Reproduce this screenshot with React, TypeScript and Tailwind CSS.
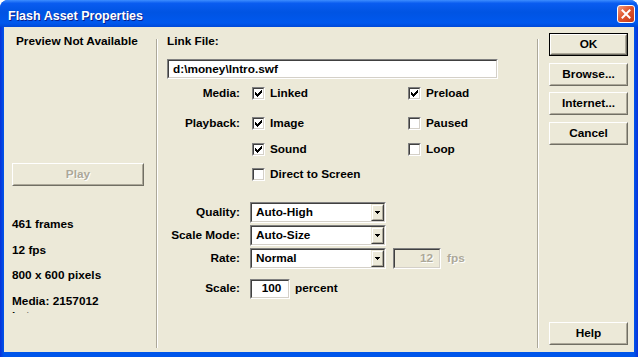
import React from "react";

const CHECK_RUNS: [number, number, number][] = [
  [6, 0, 1],
  [5, 1, 2],
  [0, 2, 1],
  [4, 2, 3],
  [0, 3, 2],
  [3, 3, 3],
  [0, 4, 5],
  [1, 5, 3],
  [2, 6, 1],
];

function Check({ checked }: { checked: boolean }) {
  return (
    <div className="w-[13px] h-[13px] shrink-0 border border-t-[#808080] border-l-[#808080] border-r-white border-b-white">
      <div className="w-full h-full border border-t-[#404040] border-l-[#404040] border-r-[#d4d0c8] border-b-[#d4d0c8] bg-white flex items-center justify-center">
        {checked && (
          <svg width="7" height="7" viewBox="0 0 7 7" shapeRendering="crispEdges">
            {CHECK_RUNS.map(([x, y, w], i) => (
              <rect key={i} x={x} y={y} width={w} height={1} fill="#000" />
            ))}
          </svg>
        )}
      </div>
    </div>
  );
}

function CheckLabel({ checked, label, wide }: { checked: boolean; label: string; wide?: boolean }) {
  return (
    <div className={wide ? "w-[156px] flex items-center gap-[5px]" : "flex items-center gap-[5px]"}>
      <Check checked={checked} />
      <span className="whitespace-nowrap">{label}</span>
    </div>
  );
}

function Btn({
  children,
  def,
  disabled,
}: {
  children: React.ReactNode;
  def?: boolean;
  disabled?: boolean;
}) {
  const bevel = (
    <div className="w-full h-full border border-t-white border-l-white border-r-[#716f64] border-b-[#716f64] bg-[#ece9d8]">
      <div
        className={
          disabled
            ? "w-full h-full border border-t-transparent border-l-transparent border-r-[#aca899] border-b-[#aca899] flex items-center justify-center text-[#aca899] [text-shadow:1px_1px_0_#ffffff]"
            : "w-full h-full border border-t-transparent border-l-transparent border-r-[#aca899] border-b-[#aca899] flex items-center justify-center"
        }
      >
        {children}
      </div>
    </div>
  );
  if (def) {
    return <div className="w-full h-full border border-black">{bevel}</div>;
  }
  return bevel;
}

function Sunken({ children, bg }: { children: React.ReactNode; bg: string }) {
  return (
    <div className="w-full h-full border border-t-[#808080] border-l-[#808080] border-r-white border-b-white">
      <div
        className={
          bg === "white"
            ? "w-full h-full border border-t-[#404040] border-l-[#404040] border-r-[#d4d0c8] border-b-[#d4d0c8] bg-white flex items-center"
            : "w-full h-full border border-t-[#404040] border-l-[#404040] border-r-[#d4d0c8] border-b-[#d4d0c8] bg-[#ece9d8] flex items-center"
        }
      >
        {children}
      </div>
    </div>
  );
}

function Combo({ value }: { value: string }) {
  return (
    <div className="ml-[10px] w-[136px] h-[21px]">
      <Sunken bg="white">
        <span className="flex-1 pl-[4px] whitespace-nowrap">{value}</span>
        <div className="w-[13px] h-full border border-t-[#ece9d8] border-l-[#ece9d8] border-r-[#404040] border-b-[#404040] bg-[#ece9d8]">
          <div className="w-full h-full border border-t-white border-l-white border-r-[#aca899] border-b-[#aca899] flex items-center justify-center">
            <svg width="5" height="3" viewBox="0 0 5 3" shapeRendering="crispEdges">
              <rect x="0" y="0" width="5" height="1" fill="#000" />
              <rect x="1" y="1" width="3" height="1" fill="#000" />
              <rect x="2" y="2" width="1" height="1" fill="#000" />
            </svg>
          </div>
        </div>
      </Sunken>
    </div>
  );
}

function Label({ text }: { text: string }) {
  return <div className="w-[73px] shrink-0 text-right whitespace-nowrap">{text}</div>;
}

export default function App() {
  return (
    <div className="w-[638px] h-[357px] overflow-hidden bg-white font-['Liberation_Sans',Arial,sans-serif] text-[11.8px] font-bold leading-[15px] text-black">
      <div className="w-full h-full flex flex-col rounded-t-[8px] overflow-hidden bg-[#0054e3]">
        {/* title bar */}
        <div className="h-[27px] shrink-0 flex items-start justify-between pl-[8px] pr-[3px] bg-[linear-gradient(to_bottom,#3d8dff_0%,#0a5cf0_12%,#0054e3_45%,#0058ee_85%,#0049d8_100%)]">
          <span className="pt-[9px] text-white text-[12.5px] [text-shadow:1px_1px_0_#0a1e8a] whitespace-nowrap">
            Flash Asset Properties
          </span>
          <div className="mt-[5px] w-[18px] h-[18px] rounded-[3px] border border-white bg-[linear-gradient(135deg,#f29a7e_0%,#e0572f_45%,#c3381a_100%)] flex items-center justify-center">
            <svg width="10" height="10" viewBox="0 0 10 10">
              <path d="M1.5 1.5 L8.5 8.5 M8.5 1.5 L1.5 8.5" stroke="#fff" strokeWidth="2" strokeLinecap="square" />
            </svg>
          </div>
        </div>

        {/* body */}
        <div className="flex-1 flex px-[4px] pb-[5px] bg-[linear-gradient(to_right,#0831d9_0px,#0055ea_4px,#0055ea_calc(100%-4px),#0831d9_100%)]">
          <div className="flex-1 flex bg-[#ece9d8]">
            {/* left column */}
            <div className="w-[152px] shrink-0 flex flex-col">
              <div className="pl-[12px] pt-[7px] whitespace-nowrap">Preview Not Available</div>
              <div className="ml-[8px] mt-[114px] w-[132px] h-[23px]">
                <Btn disabled>Play</Btn>
              </div>
              <div className="mt-[31px] pl-[8px] w-[118px] h-[96px] overflow-hidden flex flex-col gap-[10.6px]">
                <div>461 frames</div>
                <div>12 fps</div>
                <div>800 x 600 pixels</div>
                <div>Media: 2157012 bytes</div>
              </div>
            </div>

            <div className="w-[2px] mt-[12px] mb-[4px] border-l border-l-[#aca899] border-r border-r-white" />

            {/* middle column */}
            <div className="flex-1 flex flex-col pl-[9px]">
              <div className="pt-[7px]">Link File:</div>
              <div className="mt-[10px] w-[331px] h-[20px]">
                <Sunken bg="white">
                  <span className="pl-[4px] whitespace-nowrap">{"d:\\money\\Intro.swf"}</span>
                </Sunken>
              </div>

              <div className="mt-[7.4px] h-[15px] flex items-center">
                <Label text="Media:" />
                <div className="ml-[12px] flex items-center">
                  <CheckLabel checked wide label="Linked" />
                  <CheckLabel checked label="Preload" />
                </div>
              </div>

              <div className="mt-[15px] h-[15px] flex items-center">
                <Label text="Playback:" />
                <div className="ml-[12px] flex items-center">
                  <CheckLabel checked wide label="Image" />
                  <CheckLabel checked={false} label="Paused" />
                </div>
              </div>

              <div className="mt-[10.7px] h-[15px] flex items-center">
                <Label text="" />
                <div className="ml-[12px] flex items-center">
                  <CheckLabel checked wide label="Sound" />
                  <CheckLabel checked={false} label="Loop" />
                </div>
              </div>

              <div className="mt-[9.5px] h-[15px] flex items-center">
                <Label text="" />
                <div className="ml-[12px] flex items-center">
                  <CheckLabel checked={false} label="Direct to Screen" />
                </div>
              </div>

              <div className="mt-[20.4px] h-[21px] flex items-center">
                <Label text="Quality:" />
                <Combo value="Auto-High" />
              </div>
              <div className="mt-[2px] h-[21px] flex items-center">
                <Label text="Scale Mode:" />
                <Combo value="Auto-Size" />
              </div>
              <div className="mt-[2px] h-[21px] flex items-center">
                <Label text="Rate:" />
                <Combo value="Normal" />
                <div className="ml-[7px] w-[48px] h-[21px]">
                  <Sunken bg="face">
                    <span className="flex-1 text-right pr-[6px] text-[#aca899] [text-shadow:1px_1px_0_#ffffff]">12</span>
                  </Sunken>
                </div>
                <span className="ml-[6px] text-[#aca899] [text-shadow:1px_1px_0_#ffffff]">fps</span>
              </div>

              <div className="mt-[10px] h-[20px] flex items-center">
                <Label text="Scale:" />
                <div className="ml-[10px] w-[40px] h-[20px]">
                  <Sunken bg="white">
                    <span className="flex-1 text-center pl-[3px]">100</span>
                  </Sunken>
                </div>
                <span className="ml-[5px]">percent</span>
              </div>
            </div>

            <div className="w-[2px] mt-[12px] mb-[4px] border-l border-l-[#aca899] border-r border-r-white" />

            {/* right column */}
            <div className="w-[95px] shrink-0 flex flex-col pl-[10px] pt-[6px] pb-[7px]">
              <div className="w-[79px] h-[23px]">
                <Btn def>OK</Btn>
              </div>
              <div className="mt-[6.5px] w-[79px] h-[23px]">
                <Btn>Browse...</Btn>
              </div>
              <div className="mt-[6.5px] w-[79px] h-[23px]">
                <Btn>Internet...</Btn>
              </div>
              <div className="mt-[6.5px] w-[79px] h-[23px]">
                <Btn>Cancel</Btn>
              </div>
              <div className="mt-auto w-[79px] h-[23px]">
                <Btn>Help</Btn>
              </div>
            </div>
          </div>
        </div>
      </div>
    </div>
  );
}
